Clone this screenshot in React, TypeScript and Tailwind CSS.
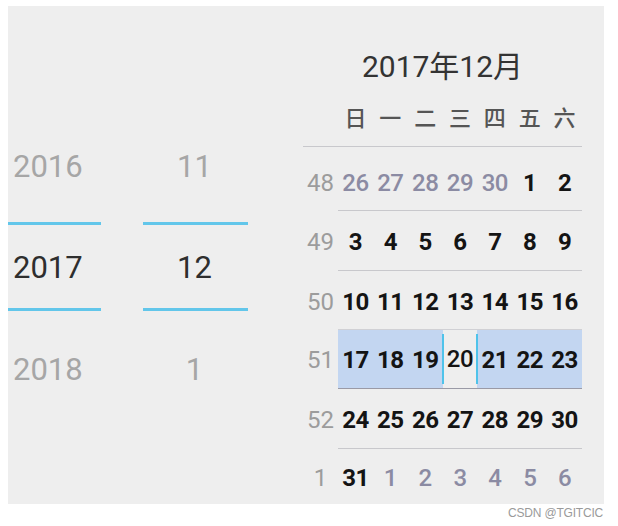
import React from 'react';

type Day = { n: number; other?: boolean };

const weekdays = ['日', '一', '二', '三', '四', '五', '六'];

const weeks: { wk: number; days: Day[] }[] = [
  { wk: 48, days: [{ n: 26, other: true }, { n: 27, other: true }, { n: 28, other: true }, { n: 29, other: true }, { n: 30, other: true }, { n: 1 }, { n: 2 }] },
  { wk: 49, days: [3, 4, 5, 6, 7, 8, 9].map(n => ({ n })) },
  { wk: 50, days: [10, 11, 12, 13, 14, 15, 16].map(n => ({ n })) },
  { wk: 51, days: [17, 18, 19, 20, 21, 22, 23].map(n => ({ n })) },
  { wk: 52, days: [24, 25, 26, 27, 28, 29, 30].map(n => ({ n })) },
  { wk: 1, days: [{ n: 31 }, ...[1, 2, 3, 4, 5, 6].map(n => ({ n, other: true }))] },
];

// height / padding for each week row, and the line above it
const rowSize = ['h-[63px] pt-[8px]', 'h-[60px] pt-[3px]', 'h-[59px] pt-[4px]', 'h-[59px] pt-[2px]', 'h-[60px] pt-[3px]', 'h-[56px] pt-[3px]'];
const rowLine = ['', 'border-t border-[#c8c8cc]', 'border-t border-[#c8c8cc]', 'border-t border-[#d0d0d4]', 'border-t border-[#9a9aa6]', 'border-t border-[#c8c8cc]'];

const Picker = ({ items, align, width }: { items: string[]; align: string; width: string }) => (
  <div className={`flex flex-col pt-[108px] ${width}`}>
    <div className={`h-[102px] pt-[4px] flex items-center ${align} text-[31px] text-[#a6a6a6]`}>{items[0]}</div>
    <div className="h-[102px] flex flex-col">
      <div className="mt-[6px] h-[3px] bg-[#62c6ea]" />
      <div className={`flex-1 pt-[3px] flex items-center ${align} text-[31px] text-[#2e2e2e]`}>{items[1]}</div>
      <div className="h-[3px] bg-[#62c6ea] mb-[7px]" />
    </div>
    <div className={`h-[102px] pt-[2px] flex items-center ${align} text-[31px] text-[#a6a6a6]`}>{items[2]}</div>
  </div>
);

export default function App() {
  return (
    <div className="w-[618px] h-[526px] bg-white flex flex-col" style={{ fontFamily: 'Roboto, "Noto Sans CJK SC", sans-serif' }}>
      <div className="ml-[8px] mt-[6px] w-[596px] h-[498px] bg-[#eeeeee] flex overflow-hidden">
        <Picker items={['2016', '2017', '2018']} align="justify-start pl-[5px]" width="w-[93px]" />
        <div className="w-[42px]" />
        <Picker items={['11', '12', '1']} align="justify-center pr-[2px]" width="w-[105px]" />

        {/* calendar */}
        <div className="ml-[55px] w-[279px] flex flex-col">
          <div className="mt-[43px] h-[36px] text-center text-[30px] leading-[36px] text-[#333333]">2017年12月</div>
          <div className="mt-[20px] h-[28px] flex pl-[35px]">
            {weekdays.map(w => (
              <div key={w} className="flex-1 flex items-center justify-center text-[22px] leading-[28px] text-[#555555] font-medium">{w}</div>
            ))}
          </div>
          <div className="mt-[13px] h-px bg-[#c8c8cc]" />
          {weeks.map((row, i) => (
            <div key={row.wk} className="flex">
              <div className={`w-[35px] flex items-center justify-center text-[24px] text-[#9c9c9c] ${rowSize[i]}`}>
                {row.wk}
              </div>
              <div className={`flex-1 flex ${rowSize[i]} ${rowLine[i]} ${row.wk === 51 ? 'bg-[#c3d6f1]' : ''}`}>
                {row.days.map((d, j) => {
                  const today = row.wk === 51 && d.n === 20;
                  return (
                    <div key={j} className={`flex-1 flex items-stretch justify-center ${today ? 'bg-[#eeeeee] -mt-[2px]' : ''}`}>
                      <div className={`flex-1 flex items-center justify-center text-[24px] tracking-[-0.5px] ${d.other ? 'text-[#8b8ba3] font-medium' : 'text-[#141414] font-bold'} ${today ? 'my-[4px] border-l-2 border-r-2 border-[#4fc3ea] font-medium text-[#1a1a1a] -mx-px' : ''}`}>
                        {d.n}
                      </div>
                    </div>
                  );
                })}
              </div>
            </div>
          ))}
        </div>
      </div>
      <div className="self-end mr-[15px] mt-[2px] text-[12px] leading-[14px] tracking-[-0.2px] text-[#9a9a9a]" style={{ fontFamily: '"Liberation Sans", sans-serif' }}>
        CSDN @TGITCIC
      </div>
    </div>
  );
}
